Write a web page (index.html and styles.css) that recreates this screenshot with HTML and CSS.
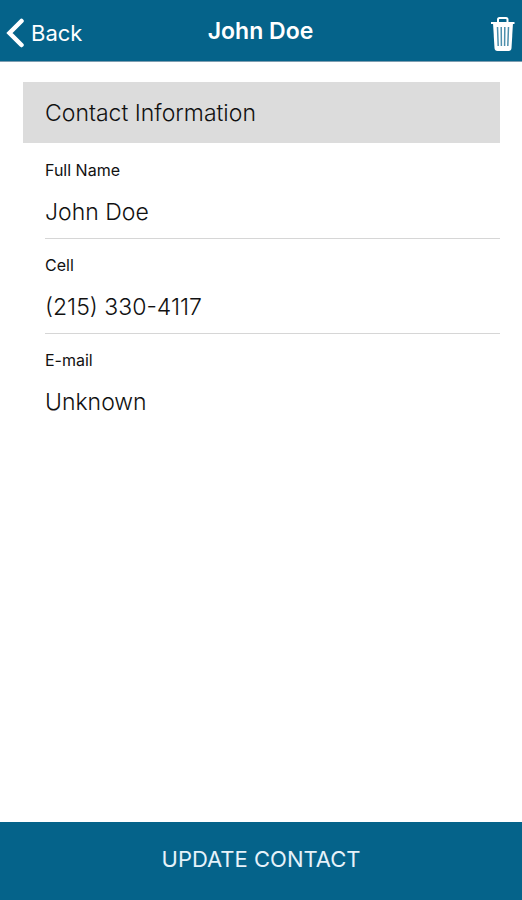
FILE: index.html
```html
<!DOCTYPE html>
<html lang="en">
<head>
<meta charset="utf-8">
<meta name="viewport" content="width=device-width, initial-scale=1">
<title>John Doe</title>
<link rel="stylesheet" href="styles.css">
</head>
<body>
<header class="bar">
  <a class="back" href="#">
    <svg class="chevron" viewBox="0 0 18 30" aria-hidden="true"><path d="M15.500 3 3.500 15l12 12"/></svg>
    <span>Back</span>
  </a>
  <h1 class="title">John Doe</h1>
  <button class="delete" type="button" aria-label="Delete contact">
    <svg class="trash" viewBox="0 0 24 34" aria-hidden="true">
      <path class="line" d="M7 5V2.500Q7 1 8.500 1h6.500Q16.500 1 16.500 2.500V5M0 6h23.500"/>
      <path class="can" d="M2 6h20l-1.500 25q-.2 3-3 3h-11q-2.800 0-3-3z"/>
      <path class="slot" d="M6.500 10l.7 19M10.200 10l.2 19M13.800 10l-.2 19M17.500 10l-.7 19"/>
    </svg>
  </button>
</header>
<main class="content">
  <h2 class="section">Contact Information</h2>
  <dl class="fields">
    <div class="field"><dt>Full Name</dt><dd>John Doe</dd></div>
    <div class="field"><dt>Cell</dt><dd>(215) 330-4117</dd></div>
    <div class="field"><dt>E-mail</dt><dd>Unknown</dd></div>
  </dl>
</main>
<button class="update" type="button">UPDATE CONTACT</button>
</body>
</html>
```

FILE: styles.css
```css
* { box-sizing: border-box; }
body {
  margin: 0;
  min-height: 100vh;
  display: flex;
  flex-direction: column;
  background: #fff;
  color: #111;
  font-family: Inter, "Liberation Sans", sans-serif;
}
.bar {
  display: grid;
  grid-template-columns: 1fr auto 1fr;
  align-items: center;
  height: 62px;
  padding: 0 7px 0 6px;
  border-bottom: 1px solid #7d9db0;
  background: #05638a;
  color: #fff;
}
.back {
  display: flex;
  align-items: center;
  gap: 7px;
  padding-top: 4px;
  color: inherit;
  font-size: 22px;
  text-decoration: none;
}
.chevron {
  width: 18px;
  height: 30px;
  fill: none;
  stroke: #fff;
  stroke-width: 4.5;
  stroke-linecap: round;
}
.title {
  margin: 0;
  font-size: 23px;
  font-weight: 600;
}
.delete {
  justify-self: end;
  display: flex;
  padding: 6px 0 0;
  border: 0;
  background: none;
}
.trash { width: 24px; height: 34px; }
.line, .slot { fill: none; stroke: #fff; stroke-width: 2; }
.can { fill: #fff; }
.slot { stroke: #4d8fac; stroke-width: 1.5; }
.content { flex: 1; padding: 20px 22px 20px 23px; }
.section {
  margin: 0;
  padding: 1px 22px 0;
  background: #dcdcdc;
  font-size: 23px;
  font-weight: 350;
  line-height: 60px;
}
.fields { margin: 0; padding-left: 22px; }
.field { padding: 16px 0 10px; }
.field + .field { padding-top: 15px; border-top: 1px solid #d6d6d6; }
.field dt { font-size: 16px; line-height: 22px; }
.field dd {
  margin: 16px 0 0;
  font-size: 23px;
  font-weight: 350;
  line-height: 31px;
}
.update {
  height: 78px;
  padding: 0 0 4px;
  border: 0;
  background: #05638a;
  color: #e6f2fa;
  font: 400 22px Inter, "Liberation Sans", sans-serif;
}
```
